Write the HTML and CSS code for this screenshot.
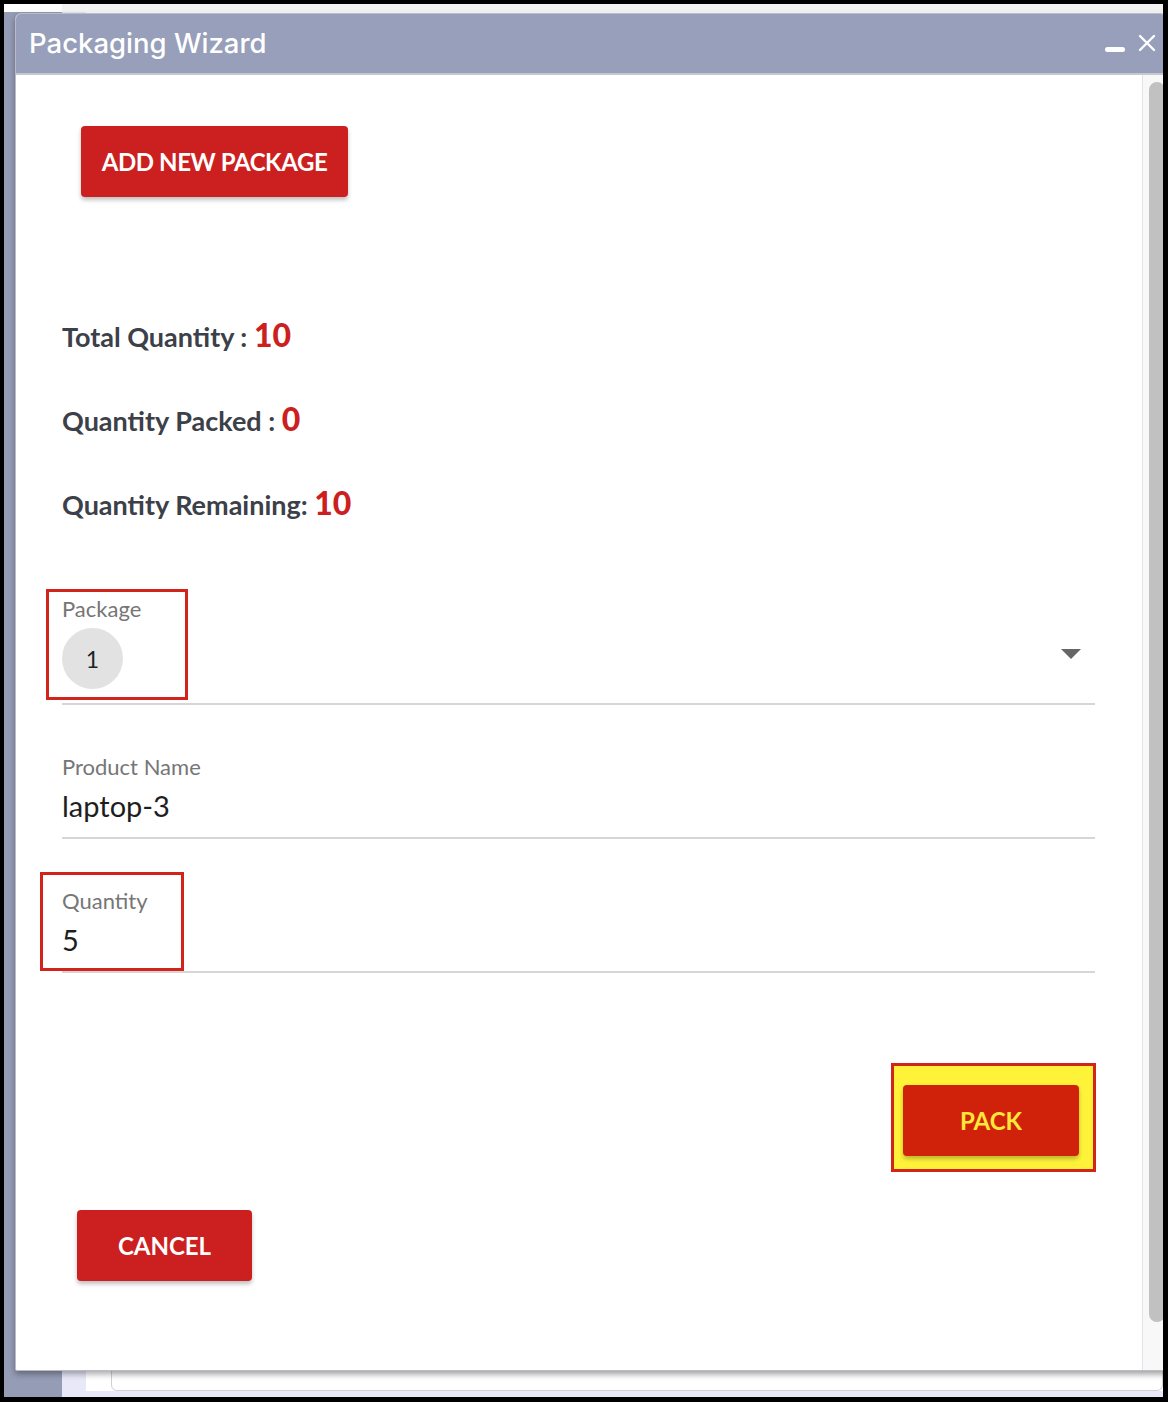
FILE: index.html
```html
<!DOCTYPE html>
<html lang="en">
<head>
    <meta charset="UTF-8">
    <meta name="viewport" content="width=device-width, initial-scale=1.0">
    <title>Packaging Wizard</title>
    <link rel="stylesheet" href="styles.css">
</head>
<body>

<div class="screen">
    <!-- page behind the dialog -->
    <div class="app">
        <div class="sidebar"></div>
        <div class="main">
            <div class="topbar"></div>
            <div class="content">
                <div class="gutter"></div>
                <div class="page">
                    <div class="card"></div>
                </div>
            </div>
        </div>
    </div>

    <div class="dialog">
        <div class="titlebar">
            <span class="title">Packaging Wizard</span>
            <span class="controls">
                <span class="minimize"></span>
                <svg class="close" width="18" height="18" viewBox="0 0 18 18">
                    <path d="M2 2 L16 16 M16 2 L2 16" stroke="#ffffff" stroke-width="2.4" stroke-linecap="round"/>
                </svg>
            </span>
        </div>
        <div class="body">
            <div class="scroll">
                <div class="top-actions">
                    <button class="btn">ADD NEW PACKAGE</button>
                </div>

                <div class="summary">
                    <p class="stat">Total Quantity : <span class="num">10</span></p>
                    <p class="stat">Quantity Packed : <span class="num">0</span></p>
                    <p class="stat">Quantity Remaining: <span class="num">10</span></p>
                </div>

                <div class="field field-select">
                    <div class="mark mark-package"></div>
                    <label>Package</label>
                    <div class="value">
                        <span class="chip">1</span>
                        <span class="caret"></span>
                    </div>
                </div>

                <div class="field">
                    <label>Product Name</label>
                    <div class="value text">laptop-3</div>
                </div>

                <div class="field">
                    <div class="mark mark-qty"></div>
                    <label>Quantity</label>
                    <div class="value text">5</div>
                </div>

                <div class="pack-row">
                    <div class="highlight">
                        <button class="btn btn-pack">PACK</button>
                    </div>
                </div>

                <div class="bottom-actions">
                    <button class="btn">CANCEL</button>
                </div>
            </div>
            <div class="scrollbar"><div class="thumb"></div></div>
        </div>
    </div>
</div>

</body>
</html>
```

FILE: styles.css
```css
* {
    box-sizing: border-box;
}
html, body {
    margin: 0;
    height: 100%;
}
body {
    background: #000;
    padding: 4px 5px 5px 4px;
    font-family: "Source Sans Pro", Lato, "Liberation Sans", sans-serif;
}
.screen {
    position: relative;
    height: 100%;
    overflow: hidden;
    background: #fff;
}

/* background app */
.app {
    display: flex;
    height: 100%;
}
.sidebar {
    width: 58px;
    background: #959cb6;
    margin-top: 8px;
}
.main {
    flex: 1;
    display: flex;
    flex-direction: column;
}
.topbar {
    height: 8px;
    background: #f3f3f3;
}
.content {
    flex: 1;
    display: flex;
}
.gutter {
    width: 24px;
    background: #e8e8f8;
}
.page {
    flex: 1;
    display: flex;
    align-items: flex-end;
    padding: 0 0 6px 25px;
    background: linear-gradient(#fff, #fff calc(100% - 6px), #e8e8f8 calc(100% - 6px));
}
.card {
    flex: 1;
    height: 30px;
    border: 1px solid #cfcfd4;
    border-radius: 6px;
    background: linear-gradient(#e6e6e8, #fff 60%);
}

/* dialog window */
.dialog {
    position: absolute;
    left: 11px;
    top: 9px;
    right: -4px;
    height: 1358px;
    background: #fff;
    border: 1px solid #b9bcc6;
    border-radius: 6px 6px 2px 2px;
    box-shadow: 0 3px 6px rgba(0, 0, 0, 0.35);
    display: flex;
    flex-direction: column;
    overflow: hidden;
}
.titlebar {
    height: 61px;
    background: #979fba;
    border-bottom: 2px solid #c6c8cf;
    display: flex;
    align-items: center;
    justify-content: space-between;
    padding: 0 6px 0 13px;
}
.title {
    font-family: Inter, "Noto Sans", sans-serif;
    color: #fff;
    font-size: 27.5px;
    font-weight: 500;
    margin-top: -1px;
}
.controls {
    display: flex;
    align-items: center;
    gap: 13px;
    margin-right: 4px;
}
.minimize {
    width: 20px;
    height: 5px;
    border-radius: 3px;
    background: #fff;
    margin-top: 12px;
}
.close {
    display: block;
    margin-top: -1px;
}

.body {
    flex: 1;
    display: flex;
    min-height: 0;
}
.scroll {
    flex: 1;
    padding: 51px 0 0 45px;
}
.scrollbar {
    width: 24px;
    background: #f8f8f8;
    border-left: 1px solid #e4e4e4;
    padding: 7px 1px 0 6px;
}
.thumb {
    height: 1240px;
    background: #c1c1c1;
    border-radius: 8px;
}

.btn {
    font-family: inherit;
    font-weight: 700;
    font-size: 24px;
    color: #fff;
    background: #cc1f1f;
    border: none;
    border-radius: 4px;
    padding: 0;
    height: 71px;
    white-space: nowrap;
    box-shadow: 0 3px 4px rgba(0, 0, 0, 0.25);
    cursor: pointer;
}
.top-actions {
    padding-left: 20px;
}
.top-actions .btn {
    width: 267px;
    letter-spacing: -0.4px;
}

.summary {
    padding: 118px 0 0 1px;
}
.stat {
    margin: 0 0 48px;
    height: 36px;
    font-size: 27px;
    font-weight: 700;
    color: #3c4048;
}
.num {
    font-size: 32px;
    font-weight: 900;
    color: #cc1f1f;
}

.field {
    position: relative;
    margin: 0 47px 0 1px;
    border-bottom: 2px solid #d6d6d6;
}
.field label {
    display: block;
    font-size: 22px;
    color: #767676;
    line-height: 28px;
}
.field-select {
    margin-top: 72px;
    padding-top: 4px;
    height: 114px;
}
.value {
    display: flex;
    align-items: center;
    justify-content: space-between;
}
.chip {
    width: 61px;
    height: 61px;
    border-radius: 50%;
    background: #e2e2e2;
    color: #222;
    font-size: 23px;
    display: flex;
    align-items: center;
    justify-content: center;
    margin-top: 5px;
}
.caret {
    width: 0;
    height: 0;
    border-left: 10px solid transparent;
    border-right: 10px solid transparent;
    border-top: 10px solid #666;
    margin: 0 14px 0 0;
    position: relative;
    top: -2px;
}
.field + .field {
    margin-top: 48px;
}
.value.text {
    font-size: 29px;
    color: #1e1e1e;
    height: 56px;
    align-items: flex-start;
    line-height: 50px;
}
.field .mark {
    position: absolute;
    border: 3px solid #d2241a;
}
.mark-package {
    left: -16px;
    top: -2px;
    width: 142px;
    height: 111px;
}
.mark-qty {
    left: -22px;
    top: -15px;
    width: 144px;
    height: 99px;
}

.pack-row {
    display: flex;
    justify-content: flex-end;
    margin: 90px 46px 0 0;
}
.highlight {
    border: 3px solid #d2241a;
    background: #fff33a;
    padding: 19px 14px 13px 9px;
}
.btn-pack {
    width: 176px;
    background: #d0220b;
    color: #ffe83a;
}

.bottom-actions {
    margin: 38px 0 0 16px;
}
.bottom-actions .btn {
    width: 175px;
}
```
